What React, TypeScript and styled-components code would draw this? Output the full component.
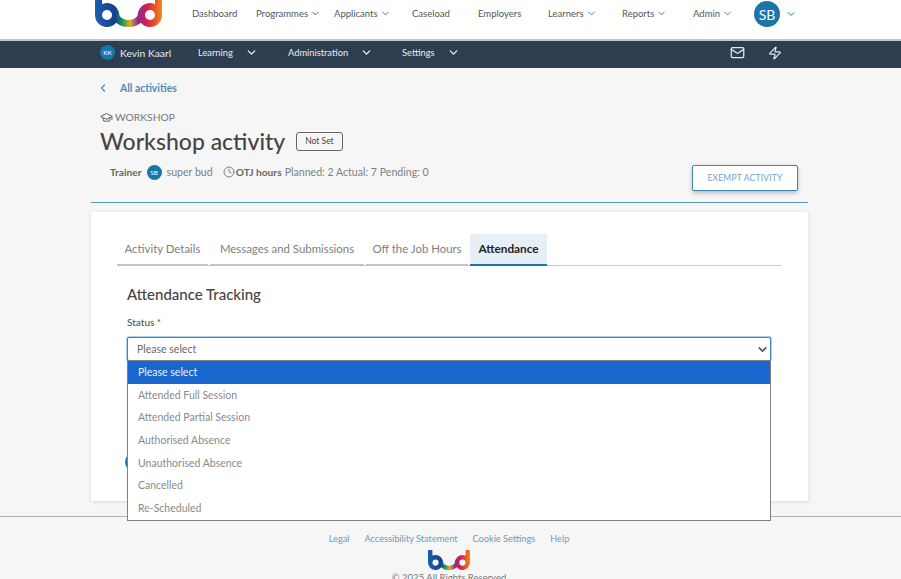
import React from "react";
import styled, { createGlobalStyle } from "styled-components";
import { ChevronDown, ChevronLeft, Mail, Zap, Clock, GraduationCap } from "lucide-react";

const Global = createGlobalStyle`
  html, body { margin: 0; padding: 0; height: 579px; overflow: hidden; background: #f6f6f6; }
  body { font-family: "Lato", "Noto Sans", sans-serif; }
  * { box-sizing: border-box; }
`;
const Page = styled.div`width: 901px; height: 579px; overflow: hidden; display: flex; flex-direction: column;`;
const TopBar = styled.header`
  height: 41px; flex: none; background: #fff; border-bottom: 2px solid #c4c6c8;
  display: flex; align-items: flex-start; padding-left: 95px; overflow: hidden;
`;
const LogoSvg = styled.svg`flex: none; display: block;`;
const LogoSlot = styled.div`flex: none; margin-top: -5px;`;
const MainNav = styled.nav`display: flex; align-items: center; height: 26px; margin-left: 30px;`;
const NavItem = styled.span<{ $w: number }>`
  width: ${p => p.$w}px; font-size: 9.5px; color: #555; display: flex; align-items: center; gap: 2px; white-space: nowrap;
  svg { color: #1b75a8; }
`;
const Avatar = styled.span<{ $size: number; $font: number }>`
  width: ${p => p.$size}px; height: ${p => p.$size}px; border-radius: 50%; background: #1a75a9; color: #fff;
  font-size: ${p => p.$font}px; display: inline-flex; align-items: center; justify-content: center; flex: none;
`;
const AccountMenu = styled.span`display: flex; align-items: center; gap: 5px; color: #1b75a8; margin-top: 1px;`;
const SubBar = styled.div`
  height: 27px; flex: none; background: #2d3e50; display: flex; align-items: center; padding: 0 0 4px 100px; color: #e8edf1; font-size: 9.3px;
`;
const SubName = styled.span`width: 98px; display: flex; align-items: center; gap: 5px; font-size: 10.3px;`;
const SubItem = styled.span<{ $w: number }>`width: ${p => p.$w}px; display: flex; align-items: center; gap: 12px;`;
const SubIcons = styled.span`margin-left: 268px; display: flex; gap: 23px; align-items: center; color: #e4e8eb;`;
const Head = styled.section`position: relative; flex: none; height: 135px; margin: 0 93px 0 91px; border-bottom: 1px solid #4f9ac6;`;
const Inner = styled.div`padding: 13px 0 0 9px;`;
const Back = styled.div`
  display: flex; align-items: center; gap: 11px; color: #4c8db5; font-size: 10.4px; font-weight: 700; height: 14px;
  svg { margin-left: -3px; }
`;
const Kind = styled.div`display: flex; align-items: center; gap: 2px; color: #777; font-size: 10.3px; margin-top: 16px; height: 12px;`;
const TitleRow = styled.div`display: flex; align-items: center; gap: 11px; margin-top: 5px; height: 26px;`;
const Title = styled.h1`margin: 0; font-size: 23px; font-weight: 500; color: #454545; line-height: 26px;`;
const Badge = styled.span`border: 1px solid #666; border-radius: 3px; height: 19px; padding: 0 8px; font-size: 8.5px; color: #444; display: flex; align-items: center;`;
const Meta = styled.div`display: flex; align-items: center; margin: 10px 0 0 10px; font-size: 10.6px; color: #808080; height: 16px; white-space: pre;`;
const Bold = styled.b`color: #666; font-size: 10.2px; font-weight: 700; margin-right: 3px;`;
const TrainerAvatar = styled.span`display: flex; margin: 0 5px 0 2px;`;
const ClockWrap = styled.span`display: flex; margin: 0 1px 0 10px;`;
const Exempt = styled.button`
  position: absolute; right: 10px; top: 97px; width: 106px; height: 26px; background: #fff; border: 1px solid #3f87b0; border-radius: 2px;
  box-shadow: 0 2px 4px rgba(0,0,0,.25); color: #6da3c2; font: 400 8.5px "Lato", sans-serif; letter-spacing: .2px;
`;
const Card = styled.main`
  position: relative; flex: none; height: 289px; margin: 9px 93px 0 91px; background: #fff; box-shadow: 0 1px 4px rgba(0,0,0,.12); padding: 22px 27px 0 26px;
`;
const Tabs = styled.div`display: flex; height: 32px; border-bottom: 1px solid #ccc; gap: 2px;`;
const Tab = styled.div<{ $w: number; $active?: boolean }>`
  width: ${p => p.$w}px; height: 32px; display: flex; align-items: center; justify-content: center; white-space: nowrap; padding-bottom: 2px;
  font-size: ${p => p.$active ? 11.8 : 11.4}px;
  color: ${p => p.$active ? "#222" : "#808080"}; font-weight: ${p => p.$active ? 700 : 400};
  background: ${p => p.$active ? "#e6eff6" : "transparent"};
  border-bottom: 2px solid ${p => p.$active ? "#1a75a9" : "#c4c4c4"};
`;
const Section = styled.h2`margin: 19px 0 0 10px; font-size: 15px; font-weight: 500; color: #444; line-height: 18px;`;
const Label = styled.div`margin: 13px 0 0 10px; font-size: 10px; font-weight: 500; color: #555; line-height: 12px;`;
const SelectBox = styled.div`
  position: relative; margin: 9px 10px 0 10px; height: 24px; border: 1px solid #3a89bb; border-radius: 2px; box-shadow: 0 0 0 1px #a9d0ea;
  padding-left: 9px; display: flex; align-items: center; justify-content: space-between; font-size: 10.5px; color: #6a6a6a; background: #fff;
  svg { margin-right: 1px; color: #555; }
`;
const Dropdown = styled.ul`
  position: absolute; left: -1px; right: -1px; top: 22px; margin: 0; padding: 0; list-style: none; background: #fff; border: 1px solid #808080; z-index: 3; height: 161px;
`;
const Option = styled.li<{ $sel?: boolean }>`
  height: 22.6px; display: flex; align-items: center; padding-left: 10px; font-size: 10.5px;
  color: ${p => p.$sel ? "#e9f1fb" : "#8a8a8a"}; background: ${p => p.$sel ? "#1a66cf" : "#fff"};
`;
const HiddenButton = styled.span`position: absolute; left: 34px; top: 240px; width: 24px; height: 20px; border-radius: 10px; background: #1a75a9;`;
const Footer = styled.footer`
  flex: none; margin-top: 15px; border-top: 1px solid #b0b0b0; display: flex; flex-direction: column; align-items: center; padding: 15px 3px 0 0;
`;
const Links = styled.div`display: flex; gap: 15px; font-size: 9.2px; color: #6a9dbb; height: 12px; align-items: center;`;
const FooterLogo = styled.div`margin-top: 6px; flex: none;`;
const Copy = styled.div`font-size: 9.5px; color: #777; margin-top: 2px; white-space: nowrap;`;

const BudLogo = ({ w, id }: { w: number; id: string }) => (
  <LogoSvg width={w} height={(w * 32) / 67} viewBox="0 0 67 32" fill="none">
    <defs>
      <linearGradient id={id} gradientUnits="userSpaceOnUse" x1="0" x2="67" y1="0" y2="0">
        <stop offset="0" stopColor="#1c5fb0" />
        <stop offset=".3" stopColor="#173f8f" />
        <stop offset=".42" stopColor="#1f9e50" />
        <stop offset=".52" stopColor="#e0b020" />
        <stop offset=".64" stopColor="#8a2a90" />
        <stop offset=".78" stopColor="#d81f4a" />
        <stop offset="1" stopColor="#f28a12" />
      </linearGradient>
    </defs>
    <path
      d="M3.5 2V20A8.5 8.5 0 1 0 20.500 20A8.500 8.500 0 1 0 3.500 20M20.500 18C20.500 32 46.500 32 46.500 18M46.500 20A8.500 8.500 0 1 0 63.500 20A8.500 8.500 0 1 0 46.500 20M63.500 20V2"
      stroke={`url(#${id})`}
      strokeWidth="7"
      strokeLinecap="round"
    />
  </LogoSvg>
);

export default function App() {
  return (
    <Page>
      <Global />
      <TopBar>
        <LogoSlot><BudLogo w={67} id="bud-top" /></LogoSlot>
        <MainNav>
          <NavItem $w={64}>Dashboard</NavItem>
          <NavItem $w={78}>Programmes <ChevronDown size={11} /></NavItem>
          <NavItem $w={78}>Applicants <ChevronDown size={11} /></NavItem>
          <NavItem $w={66}>Caseload</NavItem>
          <NavItem $w={70}>Employers</NavItem>
          <NavItem $w={74}>Learners <ChevronDown size={11} /></NavItem>
          <NavItem $w={71}>Reports <ChevronDown size={11} /></NavItem>
          <NavItem $w={61}>Admin <ChevronDown size={11} /></NavItem>
        </MainNav>
        <AccountMenu><Avatar $size={26} $font={14}>SB</Avatar><ChevronDown size={12} /></AccountMenu>
      </TopBar>
      <SubBar>
        <SubName><Avatar $size={15} $font={6.5}>KK</Avatar>Kevin Kaarl</SubName>
        <SubItem $w={90}>Learning <ChevronDown size={13} strokeWidth={2.5} /></SubItem>
        <SubItem $w={114}>Administration <ChevronDown size={13} strokeWidth={2.5} /></SubItem>
        <SubItem $w={60}>Settings <ChevronDown size={13} strokeWidth={2.5} /></SubItem>
        <SubIcons><Mail size={15} /><Zap size={14} /></SubIcons>
      </SubBar>
      <Head>
        <Inner>
          <Back><ChevronLeft size={12} strokeWidth={2.5} />All activities</Back>
          <Kind><GraduationCap size={13} />WORKSHOP</Kind>
          <TitleRow><Title>Workshop activity</Title><Badge>Not Set</Badge></TitleRow>
          <Meta>
            <Bold>Trainer</Bold>
            <TrainerAvatar><Avatar $size={15} $font={6.5}>SB</Avatar></TrainerAvatar>
            super bud
            <ClockWrap><Clock size={12} /></ClockWrap>
            <Bold>OTJ hours</Bold>
            Planned: 2 Actual: 7 Pending: 0
          </Meta>
        </Inner>
        <Exempt>EXEMPT ACTIVITY</Exempt>
      </Head>
      <Card>
        <Tabs>
          <Tab $w={91}>Activity Details</Tab>
          <Tab $w={154}>Messages and Submissions</Tab>
          <Tab $w={102}>Off the Job Hours</Tab>
          <Tab $w={77} $active>Attendance</Tab>
        </Tabs>
        <Section>Attendance Tracking</Section>
        <Label>Status *</Label>
        <SelectBox>
          Please select <ChevronDown size={13} strokeWidth={3} />
          <Dropdown>
            <Option $sel>Please select</Option>
            <Option>Attended Full Session</Option>
            <Option>Attended Partial Session</Option>
            <Option>Authorised Absence</Option>
            <Option>Unauthorised Absence</Option>
            <Option>Cancelled</Option>
            <Option>Re-Scheduled</Option>
          </Dropdown>
        </SelectBox>
        <HiddenButton />
      </Card>
      <Footer>
        <Links><span>Legal</span><span>Accessibility Statement</span><span>Cookie Settings</span><span>Help</span></Links>
        <FooterLogo><BudLogo w={42} id="bud-foot" /></FooterLogo>
        <Copy>© 2025 All Rights Reserved</Copy>
      </Footer>
    </Page>
  );
}
